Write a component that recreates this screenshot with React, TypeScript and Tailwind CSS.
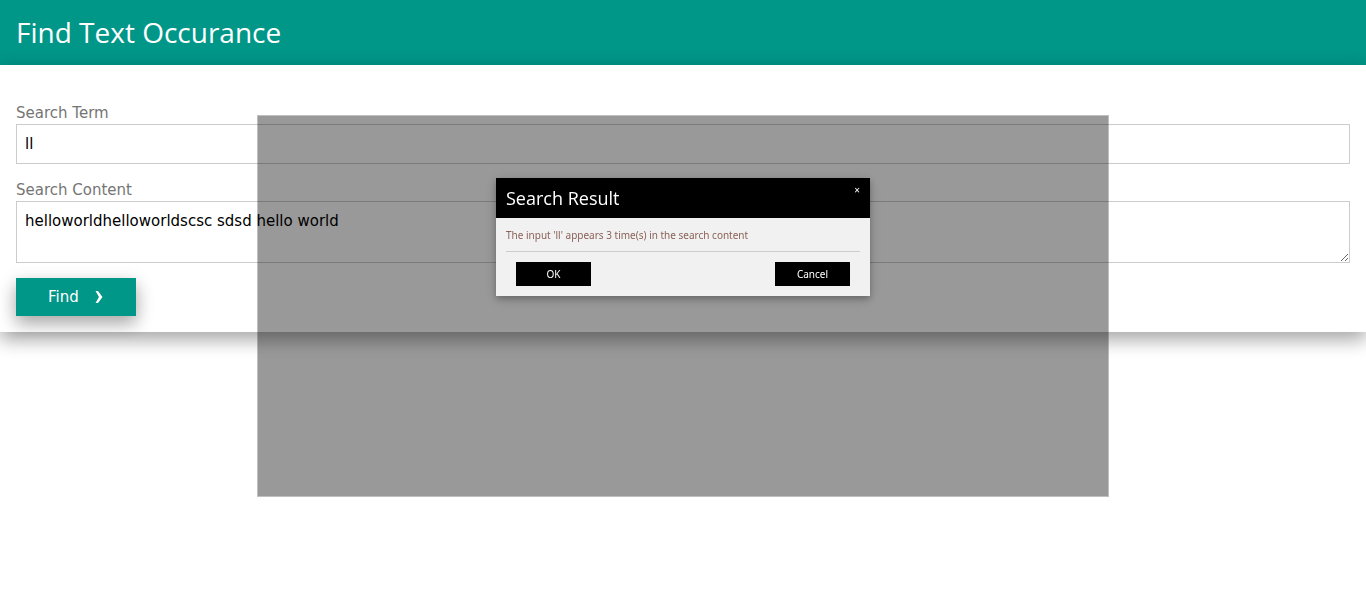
import { useState } from "react";

export default function App() {
  const [term, setTerm] = useState("ll");
  const [content, setContent] = useState("helloworldhelloworldscsc sdsd hello world");
  const [open, setOpen] = useState(true);

  const count = term ? content.split(term).length - 1 : 0;

  return (
    <div className="min-h-screen bg-white font-['DejaVu_Sans',Verdana,sans-serif] text-[15px] leading-[22px] text-black">
      <header className="bg-[#009688] px-4 py-3">
        <h1 className="font-['Open_Sans','Segoe_UI',sans-serif] text-[28px] leading-[41px] text-white">
          Find Text Occurance
        </h1>
      </header>
      <form
        className="px-4 pt-[37px] pb-4 shadow-[0_8px_16px_0_rgba(0,0,0,0.2),0_6px_20px_0_rgba(0,0,0,0.19)]"
        onSubmit={(e) => {
          e.preventDefault();
          setOpen(true);
        }}
      >
        <label htmlFor="term" className="block text-[#757575]">
          Search Term
        </label>
        <input
          id="term"
          type="text"
          value={term}
          onChange={(e) => setTerm(e.target.value)}
          className="mb-[15px] block h-10 w-full border border-[#cccccc] bg-white p-2 outline-none"
        />
        <label htmlFor="content" className="block text-[#757575]">
          Search Content
        </label>
        <textarea
          id="content"
          rows={2}
          value={content}
          onChange={(e) => setContent(e.target.value)}
          className="mb-[15px] block h-[62px] w-full resize border border-[#cccccc] bg-white p-2 outline-none"
        />
        <button
          type="submit"
          className="flex h-[38px] w-[120px] items-center gap-4 bg-[#009688] px-8 text-white shadow-[0_8px_16px_0_rgba(0,0,0,0.2),0_6px_20px_0_rgba(0,0,0,0.19)]"
        >
          Find
          <svg viewBox="0 0 8 12" className="h-3 w-2 shrink-0 fill-white" aria-hidden="true">
            <path d="M0.5 0H3L7.5 6L3 12H0.5L4 6Z" />
          </svg>
        </button>
      </form>

      {open && (
        <div className="pointer-events-none fixed inset-0 grid place-items-center">
          <div className="pointer-events-auto h-[62.4%] w-[62.4%] border border-black/25 bg-black/40 bg-clip-padding pt-[62px]">
            <div
              role="dialog"
              aria-labelledby="result-title"
              className="mx-auto max-w-[374px] bg-[#f1f1f1] font-['Noto_Sans',Verdana,sans-serif] text-[10px] leading-4 shadow-[0_3px_6px_0_rgba(0,0,0,0.2),0_3px_12px_0_rgba(0,0,0,0.19)]"
            >
              <div className="flex items-start justify-between bg-black pl-[10px] text-white">
                <h2
                  id="result-title"
                  className="font-['Open_Sans','Segoe_UI',sans-serif] text-lg leading-10"
                >
                  Search Result
                </h2>
                <button
                  type="button"
                  aria-label="Close"
                  onClick={() => setOpen(false)}
                  className="h-6 px-[10px]"
                >
                  ×
                </button>
              </div>
              <div className="px-[10px] pt-[9px] pb-[10px]">
                <p className="border-b border-[#cccccc] pb-2 text-[#8a6257]">
                  The input '{term}' appears {count} time(s) in the search content
                </p>
                <div className="flex justify-between px-[10px] pt-[10px]">
                  <button
                    type="button"
                    onClick={() => setOpen(false)}
                    className="h-6 w-[75px] bg-black text-white"
                  >
                    OK
                  </button>
                  <button
                    type="button"
                    onClick={() => setOpen(false)}
                    className="h-6 w-[75px] bg-black text-white"
                  >
                    Cancel
                  </button>
                </div>
              </div>
            </div>
          </div>
        </div>
      )}
    </div>
  );
}
